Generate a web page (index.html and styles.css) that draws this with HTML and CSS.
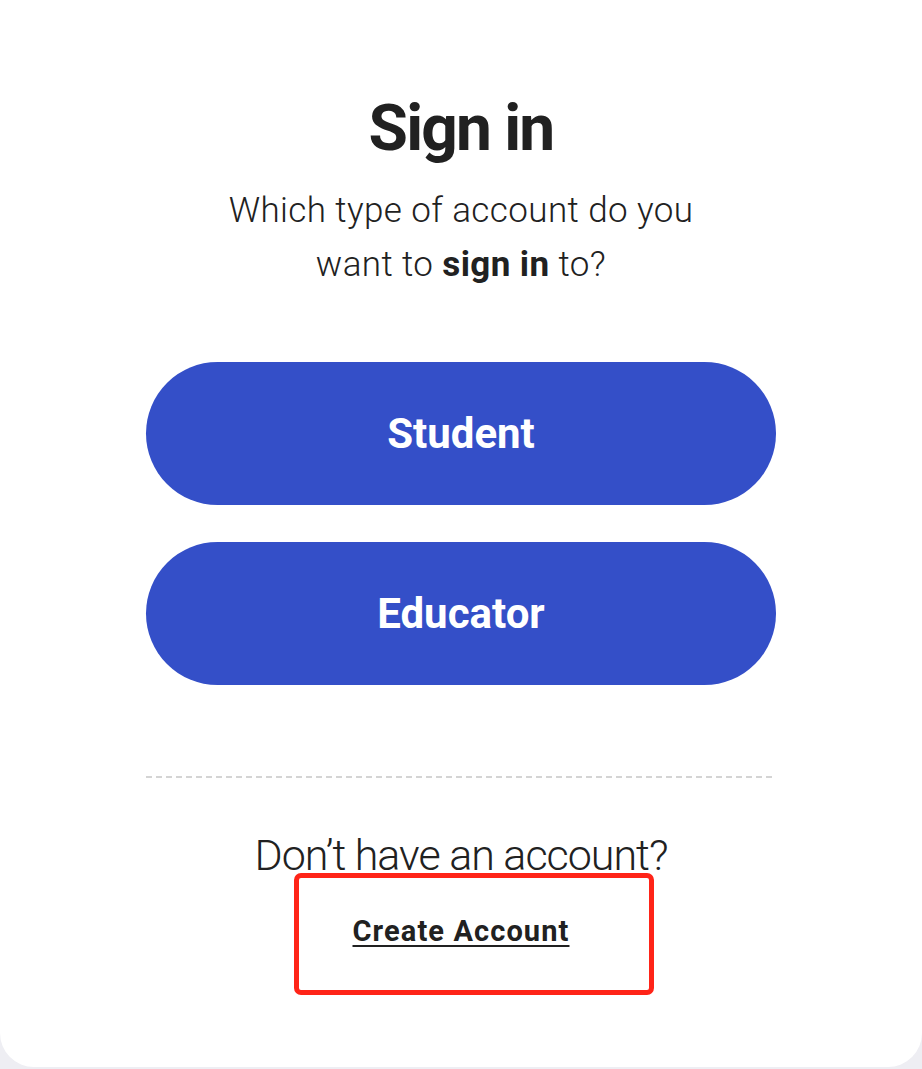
FILE: index.html
```html
<!DOCTYPE html>
<html lang="en">
<head>
<meta charset="utf-8">
<title>Sign in</title>
<link rel="stylesheet" href="styles.css">
</head>
<body>
<main class="card">
  <div class="column">
    <h1 class="title">Sign in</h1>
    <p class="subtitle">Which type of account do you<br>want to <strong>sign in</strong> to?</p>
    <div class="choices">
      <a class="choice" href="#">Student</a>
      <a class="choice" href="#">Educator</a>
    </div>
    <hr class="divider">
    <p class="prompt">Don’t have an account?</p>
    <a class="create" href="#">Create Account</a>
  </div>
  <div class="highlight"></div>
</main>
</body>
</html>
```

FILE: styles.css
```css
html, body {
  margin: 0;
  padding: 0;
}
body {
  background: #eeeef3;
  font-family: Roboto, "Liberation Sans", sans-serif;
  color: #212121;
}
.card {
  position: relative;
  width: 922px;
  height: 1067px;
  background: #ffffff;
  border-radius: 0 0 34px 34px;
  display: flex;
  justify-content: center;
}
.column {
  width: 630px;
  padding-top: 90px;
  display: flex;
  flex-direction: column;
  align-items: center;
  text-align: center;
}
.title {
  margin: 0;
  font-size: 64px;
  line-height: 77px;
  font-weight: 700;
  letter-spacing: -1.8px;
}
.subtitle {
  margin: 17px 0 0;
  font-size: 35px;
  line-height: 54px;
  font-weight: 300;
  letter-spacing: 0.4px;
}
.subtitle strong {
  font-weight: 700;
}
.choices {
  margin-top: 70px;
  width: 100%;
  display: flex;
  flex-direction: column;
  gap: 37px;
}
.choice {
  height: 143px;
  border-radius: 72px;
  background: #344fc8;
  color: #ffffff;
  display: flex;
  align-items: center;
  justify-content: center;
  font-size: 42px;
  font-weight: 700;
  text-decoration: none;
}
.divider {
  width: 100%;
  margin: 91px 0 0;
  border: 0;
  height: 2px;
  background: repeating-linear-gradient(to right, #d4d4d4 0 6px, transparent 6px 10px);
}
.prompt {
  margin: 51px 0 0;
  font-size: 43px;
  line-height: 52px;
  font-weight: 300;
  letter-spacing: -1px;
}
.create {
  margin-top: 32px;
  font-size: 29px;
  line-height: 36px;
  font-weight: 700;
  letter-spacing: 1.1px;
  color: #212121;
  text-decoration: underline;
  text-decoration-thickness: 2px;
  text-underline-offset: 4px;
}
.highlight {
  position: absolute;
  left: 294px;
  top: 873px;
  width: 350px;
  height: 112px;
  border: 5px solid #ff2418;
  border-radius: 7px;
}
```
